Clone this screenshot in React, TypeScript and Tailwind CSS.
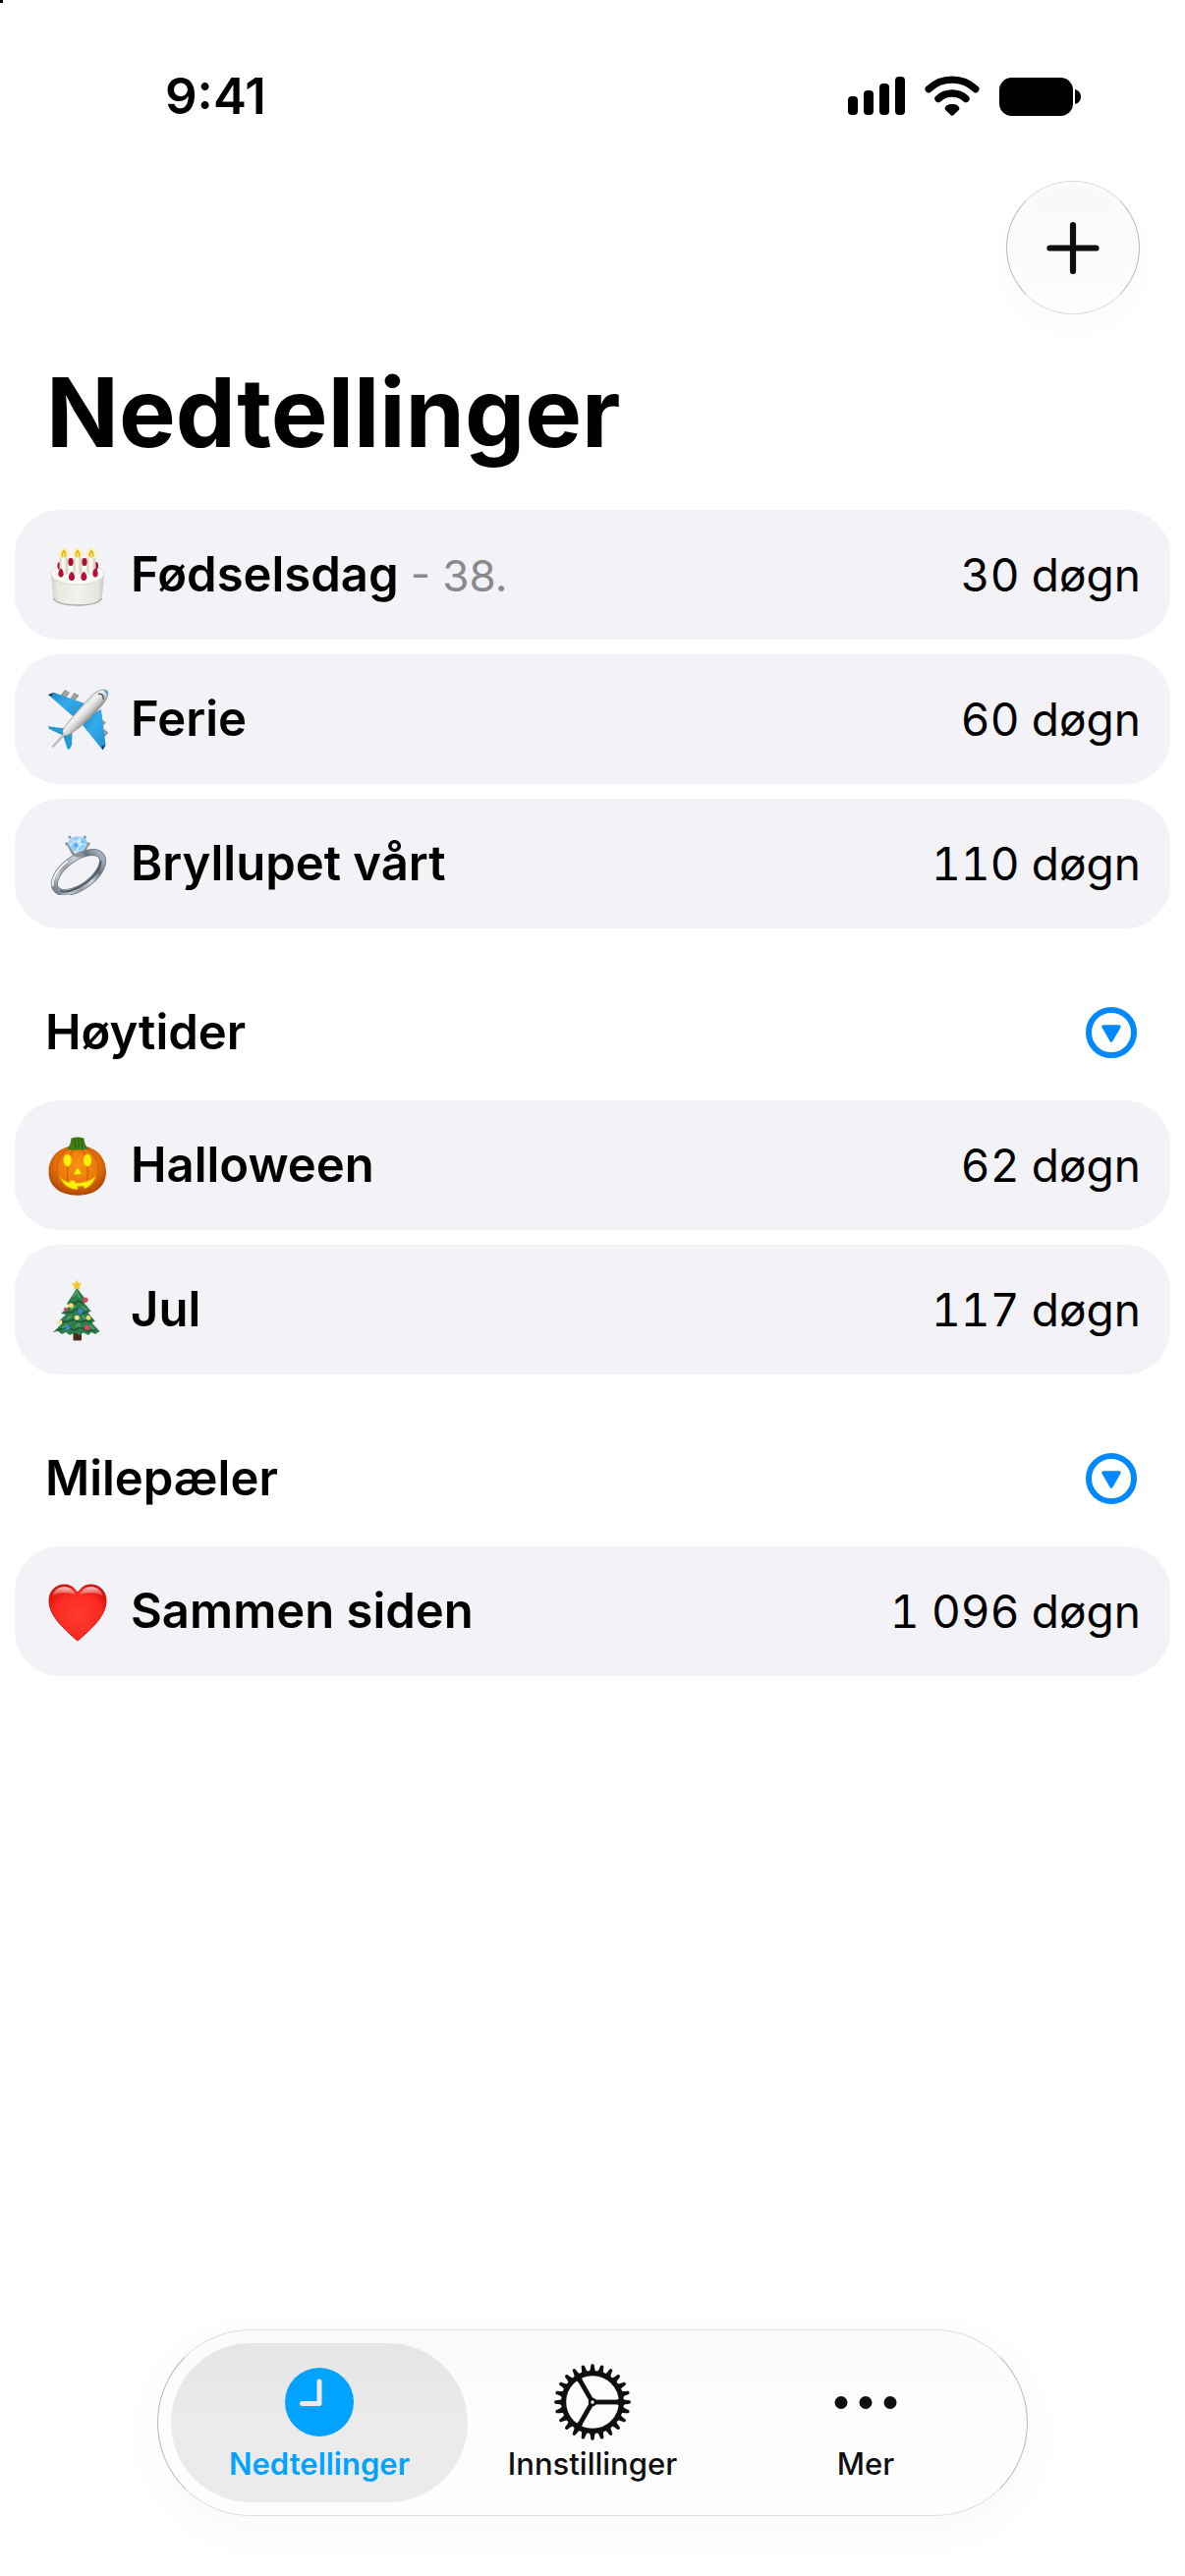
import type { ReactNode } from "react"

type Countdown = {
  icon: ReactNode
  name: string
  note?: string
  days: string
}

/* ---------- status bar icons ---------- */

function SignalIcon() {
  return (
    <svg width="58" height="42" viewBox="0 0 58 42">
      <rect x="0" y="21" width="10" height="19" rx="4" />
      <rect x="16" y="15" width="10" height="25" rx="4" />
      <rect x="32" y="8" width="10" height="32" rx="4" />
      <rect x="48" y="1" width="10" height="39" rx="4" />
    </svg>
  )
}

function WifiIcon() {
  return (
    <svg width="56" height="42" viewBox="0 0 56 42">
      <g fill="none" stroke="#000" strokeWidth="7.4" strokeLinecap="round">
        <path d="M4.2 13.6 C17.5 1 38.5 1 51.8 13.6" />
        <path d="M14 23.4 C22 16.2 34 16.2 42 23.4" />
      </g>
      <path d="M20.6 33.2 C20.6 31 23.6 28.9 28 28.9 C32.4 28.9 35.4 31 35.4 33.2 C35.4 34.3 34.8 35 34 35.8 L29.6 40 C28.6 41 27.4 41 26.4 40 L22 35.8 C21.2 35 20.6 34.3 20.6 33.2 Z" />
    </svg>
  )
}

function BatteryIcon() {
  return (
    <svg width="84" height="39" viewBox="0 0 84 39">
      <rect width="75" height="39" rx="12.5" />
      <path d="M77 12 C81 13 83 16 83 19.5 C83 23 81 26 77 27 Z" />
    </svg>
  )
}

/* ---------- list icons ---------- */

function CakeIcon() {
  return (
    <svg width="64" height="64" viewBox="0 0 64 64">
      <defs>
        <linearGradient id="cakeSide" x1="0" y1="0" x2="1" y2="0">
          <stop offset="0" stopColor="#cfcdc6" />
          <stop offset="0.12" stopColor="#e9e8e2" />
          <stop offset="0.5" stopColor="#f2f1ec" />
          <stop offset="0.88" stopColor="#e6e5df" />
          <stop offset="1" stopColor="#c9c7c0" />
        </linearGradient>
      </defs>
      <path d="M5 32 L7 55 C8 60.5 19 63.5 32 63.5 C45 63.5 56 60.5 57 55 L59 32 Z" fill="url(#cakeSide)" />
      <path d="M7.5 56 C10 61 20 63 32 63 C44 63 54 61 56.5 56" fill="none" stroke="#a9a69c" strokeWidth="1.4" />
      <ellipse cx="32" cy="31" rx="27" ry="11" fill="#fbfbf8" stroke="#d2d0c9" strokeWidth="0.8" />
      <g fill="#a80e35">
        <ellipse cx="14" cy="23" rx="2.6" ry="4" />
        <ellipse cx="25" cy="19" rx="3" ry="4" />
        <ellipse cx="39" cy="19" rx="3" ry="4" />
        <ellipse cx="50.5" cy="23" rx="2.6" ry="4" />
      </g>
      {[18, 32, 46].map((x) => (
        <g key={x}>
          <circle cx={x} cy="10" r="5.5" fill="#fff3a8" opacity="0.6" />
          <path d={`M${x} 6 C${x + 4} 11 ${x + 3} 14.5 ${x} 14.5 C${x - 3} 14.5 ${x - 4} 11 ${x} 6 Z`} fill="#e9b816" />
          <ellipse cx={x} cy="12" rx="1.1" ry="2" fill="#ffe978" />
          <rect x={x - 4.5} y="14.5" width="9" height="17" rx="2" fill="#d9d6c6" />
          <rect x={x - 2.5} y="14.5" width="4" height="16.5" fill="#f8f6ea" />
        </g>
      ))}
      <g fill="#b30d38">
        <path d="M15 25.5 C18 27 19 34.5 15 34.5 C11 34.5 12 27 15 25.5 Z" />
        <path d="M26 29 C29.5 30.5 30.5 38 26 38 C21.5 38 22.5 30.5 26 29 Z" />
        <path d="M38.3 29 C41.8 30.5 42.8 38 38.3 38 C33.8 38 34.8 30.5 38.3 29 Z" />
        <path d="M50 25.5 C53 27 54 34.5 50 34.5 C46 34.5 47 27 50 25.5 Z" />
      </g>
    </svg>
  )
}

function PlaneIcon() {
  return (
    <svg width="64" height="64" viewBox="0 0 64 64">
      <defs>
        <linearGradient id="planeBody" x1="0.35" y1="0.35" x2="0.62" y2="0.62">
          <stop offset="0" stopColor="#bdbdbd" />
          <stop offset="0.4" stopColor="#f2f2f2" />
          <stop offset="0.65" stopColor="#cccccc" />
          <stop offset="1" stopColor="#6c6c6c" />
        </linearGradient>
        <linearGradient id="planeWing" x1="0" y1="0" x2="1" y2="1">
          <stop offset="0" stopColor="#1c86c4" />
          <stop offset="0.45" stopColor="#34aaea" />
          <stop offset="1" stopColor="#1f90d0" />
        </linearGradient>
      </defs>
      <g fill="#a4a09c" stroke="#77736f" strokeWidth="0.6">
        <path d="M15 8 L19 2.5 L23.5 5 L19 11 Z" />
        <path d="M25 11 L28.5 5.5 L33 8 L28.5 13.5 Z" />
        <path d="M52 38 L57 33 L60.5 35.5 L55 41.5 Z" />
        <path d="M54.5 47 L59.5 43 L63 46 L57.5 51 Z" />
      </g>
      <path d="M2 7 L8 5 L42 17 L27 29 Z" fill="url(#planeWing)" />
      <path d="M56 22 L60.5 58 L57.5 63.5 L37 38 L48 26 Z" fill="url(#planeWing)" />
      <path d="M2 39.3 L19 41.5 L17 48.5 L3 42 Z" fill="#2599d6" />
      <path d="M17 48 L26.5 44 L26 58.5 L23.5 63 L21.5 62 Z" fill="#2599d6" />
      <path d="M2 7 L8 5 L5 9 Z M60.5 58 L57.5 63.5 L56.5 60 Z" fill="#12384f" />
      <path d="M6.5 59.5 L17.5 47 C15.5 44 18 41 21 37 C30 26 40 14 48 6.5 C53 2 60 1 62 3 C64 5.5 62.5 11 58 16.5 C50 26 38 38 28 44.5 C24 47.5 21 49.5 18.5 48.5 L7.5 60 C6.5 60.5 6 60.5 6.5 59.5 Z" fill="url(#planeBody)" stroke="#8f8b88" strokeWidth="0.7" />
      <path d="M58 2.3 C61 2 63.5 4 62.5 8 C61.5 5.5 60 4 58 2.3 Z" fill="#2b9bd8" />
      <path d="M53 6.5 C56.5 5.5 59 8 58 12" fill="none" stroke="#55504d" strokeWidth="1.4" />
    </svg>
  )
}

function RingIcon() {
  return (
    <svg width="64" height="64" viewBox="0 0 64 64">
      <defs>
        <linearGradient id="ringBand" x1="0" y1="0" x2="1" y2="0">
          <stop offset="0" stopColor="#7d858f" />
          <stop offset="0.15" stopColor="#c3c9d0" />
          <stop offset="0.35" stopColor="#949da7" />
          <stop offset="0.6" stopColor="#cfd4da" />
          <stop offset="0.8" stopColor="#66707d" />
          <stop offset="1" stopColor="#a7afb8" />
        </linearGradient>
      </defs>
      <g transform="rotate(-36 33 41)" fill="none">
        <ellipse cx="33" cy="41" rx="28.5" ry="14.5" stroke="#6a7482" strokeWidth="7" />
        <ellipse cx="33" cy="41" rx="28.5" ry="14.5" stroke="url(#ringBand)" strokeWidth="5.4" />
        <path d="M58 45 C53 51 44 54 33 54 C20 54 9 50 7 45" stroke="#4c5664" strokeWidth="2" />
        <path d="M3.500 37 C7 30 18 25.500 31 25" stroke="#eef1f4" strokeWidth="2" />
      </g>
      <path d="M20.5 11 L23 14 L30 23 L34.5 23 L41 14.5 L43.5 11 L41.5 16 L36 23.5 L32 25 L27 23.5 Z" fill="#8e979f" stroke="#7c858d" strokeWidth="0.8" />
      <path d="M24 7 L29 4.5 L36 4.5 L41 7.5 L42 12 L37 18 L32 20.5 L26.5 18 L22 12.5 Z" fill="#8fd0fb" />
      <path d="M24 7 L30 9 L36 4.5 L35 11 L42 12 L34 14 L32 20.5 L29 14 L22 12.5 L28 10 Z" fill="#cdeaff" />
      <path d="M27 12 L31 10 L33 14 L30 17 Z M37 8 L39 11 L36 11 Z" fill="#5aaef4" />
      <g fill="#8a9299">
        <circle cx="24" cy="5" r="1.5" />
        <circle cx="39.5" cy="5" r="1.5" />
        <circle cx="21" cy="12" r="1.7" />
        <circle cx="43" cy="12" r="1.7" />
      </g>
    </svg>
  )
}

function PumpkinIcon() {
  return (
    <svg width="64" height="64" viewBox="0 0 64 64">
      <defs>
        <radialGradient id="pumpkinSkin" cx="0.5" cy="0.4" r="0.6">
          <stop offset="0" stopColor="#fb9212" />
          <stop offset="0.6" stopColor="#ea770c" />
          <stop offset="1" stopColor="#a84206" />
        </radialGradient>
      </defs>
      <path d="M32 13 C42 10.5 61 18 61 39 C61 54 49 62.7 32 62.7 C15 62.7 2.5 54 2.5 39 C2.5 18 22 10.5 32 13 Z" fill="url(#pumpkinSkin)" />
      <g fill="none" stroke="#c9590a" strokeWidth="1.4" opacity="0.7">
        <path d="M26 14 C8 20 6 48 18 60" />
        <path d="M29 14 C20 24 19 50 27 62" />
        <path d="M35 14 C44 24 45 50 37 62" />
        <path d="M38 14 C56 20 58 48 46 60" />
      </g>
      <path d="M21 15 C24 13 25 9 25.5 4.5 C29 3 35 3 38.5 4.5 C39 9 40 13 43.5 15 C40 17 38 15 36 17 C34 15 33 18 31 16 C29 18 28 15 26 17 C24 15 23 17 21 15 Z" fill="#3f7d14" />
      <path d="M29 5 L29.5 14 M33 5 L33 14 M36 5.5 L36.5 14" stroke="#2a5c0b" strokeWidth="1" />
      <g fill="#f9f00c" stroke="#e0a007" strokeWidth="0.7">
        <ellipse cx="21.7" cy="27" rx="4.3" ry="6.3" />
        <ellipse cx="42" cy="27" rx="4.3" ry="6.3" />
        <path d="M32 34.5 C34 37 37 41.5 35.5 41.5 L28.5 41.5 C27 41.5 30 37 32 34.5 Z" />
        <path d="M14 43.5 C17 47.5 20 49 24 49.5 L24 47.5 L29.5 47.8 L29.5 50 C37 50.5 45 48 50.5 43 C48.5 50 44 54.5 38.5 56 L38.5 53.5 L32 53.5 L32 56.8 C23 56.5 16.5 51.5 14 43.5 Z" />
      </g>
    </svg>
  )
}

function TreeIcon() {
  return (
    <svg width="64" height="64" viewBox="0 0 64 64">
      <rect x="27.5" y="54" width="8.5" height="9.5" rx="1" fill="#4a2a18" />
      <path d="M31.3 10 L42 24 L38.5 25 L46 34 L42 34.5 L50 44 L46 45 L54.5 54 L50 57 L46 55 L43 58 L38 55.5 L34 58 L29 55.5 L24 58 L20 55 L16 57 L12 54 L7 55 L16 46 L11 45.5 L20 37 L15 36 L24 28 L21 26 Z" fill="#2f7d4c" />
      <g fill="none" stroke="#1b5534" strokeWidth="1.6">
        <path d="M24 24 L29 26 L33 23 L38 26" />
        <path d="M19 35 L26 35 L31 31 L36 36 L43 34" />
        <path d="M14 45 L22 44 L28 42 L34 45 L41 43 L47 45" />
        <path d="M12 53 L20 50 L28 53 L35 50 L42 54 L50 53" />
      </g>
      <g fill="none" stroke="#56ad70" strokeWidth="1.3">
        <path d="M27 19 L31 14 L34 20" />
        <path d="M25 32 L30 28 M36 29 L41 32" />
        <path d="M21 42 L26 38 M37 38 L40 42" />
        <path d="M16 51 L22 47 M30 50 L33 46 L35 50 M44 48 L49 52" />
      </g>
      <path d="M31.3 1.5 L32.9 5.2 L36.8 5.5 L33.8 8 L34.8 11.8 L31.3 9.8 L27.8 11.8 L28.8 8 L25.8 5.5 L29.7 5.2 Z" fill="#f8c629" />
      <g fill="#e04460">
        <circle cx="40" cy="22" r="2.6" />
        <circle cx="19.7" cy="31.7" r="1.9" />
        <circle cx="41.7" cy="50.3" r="2.7" />
      </g>
      <g fill="#3f82d8">
        <circle cx="34.7" cy="33.7" r="2.6" />
        <circle cx="21.7" cy="50.7" r="2.4" />
      </g>
      <g fill="#f3dc62">
        <circle cx="25.3" cy="27.7" r="2.5" />
        <circle cx="43" cy="40.3" r="2.4" />
      </g>
      <g fill="#f0e2a0">
        <circle cx="31.3" cy="40.3" r="2.5" />
        <circle cx="14" cy="45" r="2.4" />
      </g>
    </svg>
  )
}

function HeartIcon() {
  return (
    <svg width="64" height="64" viewBox="0 0 64 64">
      <defs>
        <radialGradient id="heartFill" cx="0.5" cy="0.55" r="0.6">
          <stop offset="0" stopColor="#ff3b2f" />
          <stop offset="0.7" stopColor="#fb2a20" />
          <stop offset="1" stopColor="#d5110d" />
        </radialGradient>
        <linearGradient id="heartShine" x1="0" y1="0" x2="0" y2="1">
          <stop offset="0" stopColor="#fff" stopOpacity="0.75" />
          <stop offset="1" stopColor="#fff" stopOpacity="0" />
        </linearGradient>
      </defs>
      <path d="M32 13.5 C28.5 7.5 23.5 5 18.5 5 C9.5 5 3 12 3 21 C3 38 20 51 30.5 61 C31.5 62 32.5 62 33.5 61 C44 51 61 38 61 21 C61 12 54.5 5 45.5 5 C40.5 5 35.5 7.5 32 13.5 Z" fill="url(#heartFill)" stroke="#c9120e" strokeWidth="1" />
      <path d="M6 18 C7 10.5 13 7 18.5 7 C24 7 28 10.5 30 15.5 C26 13 10 11.5 6 18 Z" fill="url(#heartShine)" />
      <path d="M58 18 C57 10.5 51 7 45.5 7 C40 7 36 10.5 34 15.5 C38 13 54 11.5 58 18 Z" fill="url(#heartShine)" />
    </svg>
  )
}

/* ---------- controls ---------- */

function ExpandIcon() {
  return (
    <svg width="52" height="52" viewBox="0 0 52 52">
      <circle cx="26" cy="26" r="23" fill="none" stroke="#0088ff" strokeWidth="6" />
      <path d="M18 20 H34 L26 34 Z" fill="#0088ff" stroke="#0088ff" strokeWidth="3.4" strokeLinejoin="round" />
    </svg>
  )
}

function ClockIcon() {
  return (
    <svg width="78" height="78" viewBox="0 0 78 78">
      <circle cx="39" cy="39" r="35" fill="#02a2ff" />
      <path d="M39 18 V40.5 H21.5" fill="none" stroke="#ebebeb" strokeWidth="5" strokeLinecap="round" strokeLinejoin="round" />
    </svg>
  )
}

function GearIcon() {
  return (
    <svg width="78" height="78" viewBox="-39 -39 78 78">
      {Array.from({ length: 24 }).map((_, i) => (
        <path
          key={i}
          d="M-3.8 -30 C-2.3 -32 -2 -35 -1.7 -37.5 C-1.5 -39.3 1.5 -39.3 1.7 -37.5 C2 -35 2.3 -32 3.8 -30 Z"
          transform={`rotate(${i * 15})`}
          fill="#0f0f0f"
        />
      ))}
      <circle r="29.4" fill="none" stroke="#0f0f0f" strokeWidth="5.2" />
      {[0, 120, 240].map((a) => (
        <g key={a} transform={`rotate(${a})`} fill="#0f0f0f">
          <rect x="2.5" y="-2.4" width="27" height="4.8" />
          <path d="M24.5 -2.3 C26.5 -2.3 27.5 -3.5 27.5 -6 L30 -6 V6 L27.5 6 C27.5 3.5 26.5 2.3 24.5 2.3 Z" />
        </g>
      ))}
      <circle r="3" fill="#fdfdfd" stroke="#0f0f0f" strokeWidth="2.6" />
    </svg>
  )
}

function DotsIcon() {
  return (
    <svg width="78" height="78" viewBox="0 0 78 78" fill="#0f0f0f">
      <circle cx="14" cy="39.5" r="6.5" />
      <circle cx="39" cy="39.5" r="6.5" />
      <circle cx="64" cy="39.5" r="6.5" />
    </svg>
  )
}

/* ---------- data ---------- */

const own: Countdown[] = [
  { icon: <CakeIcon />, name: "Fødselsdag", note: "- 38.", days: "30 døgn" },
  { icon: <PlaneIcon />, name: "Ferie", days: "60 døgn" },
  { icon: <RingIcon />, name: "Bryllupet vårt", days: "110 døgn" },
]

const holidays: Countdown[] = [
  { icon: <PumpkinIcon />, name: "Halloween", days: "62 døgn" },
  { icon: <TreeIcon />, name: "Jul", days: "117 døgn" },
]

const milestones: Countdown[] = [
  { icon: <HeartIcon />, name: "Sammen siden", days: "1 096 døgn" },
]

const tabs = [
  { label: "Nedtellinger", icon: <ClockIcon />, active: true },
  { label: "Innstillinger", icon: <GearIcon />, active: false },
  { label: "Mer", icon: <DotsIcon />, active: false },
]

function CountdownList({ items }: { items: Countdown[] }) {
  return (
    <ul className="flex flex-col gap-[15px] px-[15px]">
      {items.map((item) => (
        <li key={item.name} className="flex h-[132px] items-center gap-[22px] rounded-[46px] bg-[#f2f2f7] pr-[30px] pl-8">
          <span className="shrink-0">{item.icon}</span>
          <div className="flex flex-1 items-baseline gap-3">
            <span className="text-[49px] leading-[52px] font-semibold">{item.name}</span>
            {item.note && <span className="text-[44px] leading-[52px] text-[#8a8a8e]">{item.note}</span>}
          </div>
          <span className="text-[46px] leading-[52px] tabular-nums">{item.days}</span>
        </li>
      ))}
    </ul>
  )
}

function Section({ title, items }: { title: string; items: Countdown[] }) {
  return (
    <section>
      <div className="flex items-center justify-between pt-20 pr-[49px] pb-[43px] pl-[46px]">
        <h2 className="text-[49px] leading-[52px] font-semibold">{title}</h2>
        <button type="button" aria-label={title}>
          <ExpandIcon />
        </button>
      </div>
      <CountdownList items={items} />
    </section>
  )
}

export default function App() {
  return (
    <main className="relative flex min-h-screen flex-col bg-white font-['Inter','Liberation_Sans',sans-serif] text-black">

      <div className="absolute top-0 left-0 h-[3px] w-[3px] bg-black" />

      {/* status bar */}
      <div className="flex items-center justify-between pt-[67px] pr-[105px] pl-[168px]">
        <span className="text-[51px] leading-[62px] font-semibold">9:41</span>
        <div className="flex items-center gap-5">
          <SignalIcon />
          <WifiIcon />
          <BatteryIcon />
        </div>
      </div>

      {/* toolbar */}
      <header className="flex flex-col pt-[55px] pr-[46px] pl-[47px]">
        <button
          type="button"
          aria-label="Legg til"
          className="flex h-[136px] w-[136px] items-center justify-center self-end rounded-full border border-x-[#b8b8b8] border-y-[#dcdcdc] bg-linear-to-b from-[#f8f8f8] to-[#fdfdfd] shadow-[0_12px_32px_rgba(0,0,0,0.02),inset_0_0_16px_#fff]"
        >
          <svg width="54" height="54" viewBox="0 0 54 54">
            <path d="M27 4 V51 M3.5 27.5 H50.5" stroke="#0f0f0f" strokeWidth="6.2" strokeLinecap="round" />
          </svg>
        </button>
        <h1 className="mt-10 mb-[39px] text-[97px] leading-[120px] font-bold">Nedtellinger</h1>
      </header>

      <CountdownList items={own} />
      <Section title="Høytider" items={holidays} />
      <Section title="Milepæler" items={milestones} />

      {/* tab bar */}
      <nav className="mx-40 mt-auto mb-[61px] flex -space-x-6 rounded-full border border-x-[#b8b8b8] border-y-[#dedede] bg-linear-to-b from-[#f9f9f9] to-[#fdfdfd] to-40% p-[13px] shadow-[0_12px_48px_rgba(0,0,0,0.03),inset_0_0_20px_#fff]">
        {tabs.map((tab) => (
          <button
            key={tab.label}
            type="button"
            className={
              tab.active
                ? "flex h-[162px] flex-1 flex-col items-center justify-center gap-[6px] rounded-full bg-linear-to-b from-[#e6e5e6] to-[#ebebeb] to-50% text-[#02a2ff]"
                : "flex h-[162px] flex-1 flex-col items-center justify-center gap-[6px] rounded-full text-[#0f0f0f]"
            }
          >
            {tab.icon}
            <span className={tab.active ? "text-[31px] leading-9 font-semibold" : "text-[31px] leading-9 font-medium"}>
              {tab.label}
            </span>
          </button>
        ))}
      </nav>

    </main>
  )
}
